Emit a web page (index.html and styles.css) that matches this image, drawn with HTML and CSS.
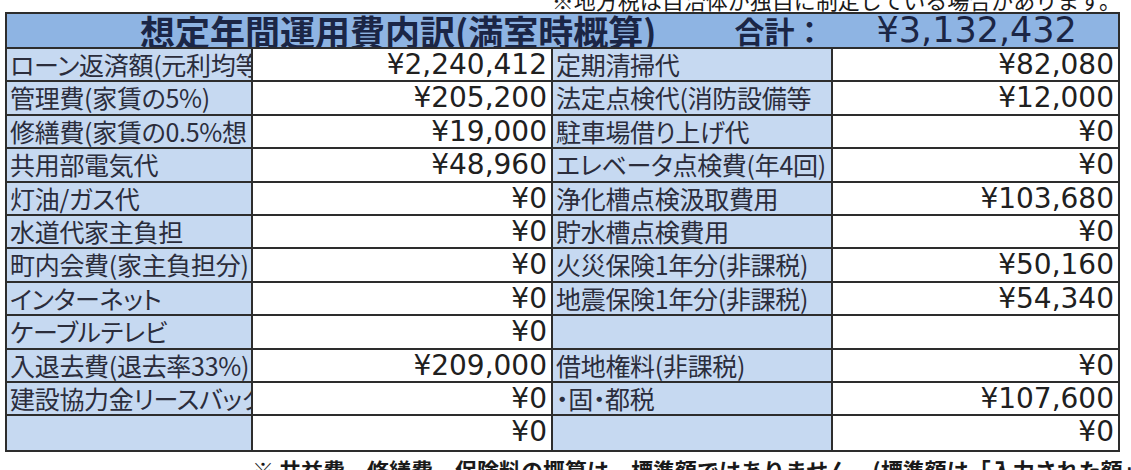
FILE: index.html
```html
<!DOCTYPE html>
<html lang="ja">
<head>
<meta charset="utf-8">
<title>想定年間運用費内訳</title>
<link rel="stylesheet" href="styles.css">
</head>
<body>
<div class="page">
  <div class="note-top">※地方税は自治体が独自に制定している場合があります。</div>
  <div class="sheet">
    <div class="head">
      <span class="head-title">想定年間運用費内訳(満室時概算)</span>
      <span class="head-sum">合計：</span>
      <span class="head-total">¥3,132,432</span>
    </div>
    <div class="grid">
      <div class="lbl">ローン返済額(元利均等</div><div class="val">¥2,240,412</div><div class="lbl">定期清掃代</div><div class="val">¥82,080</div>
      <div class="lbl">管理費(家賃の5%)</div><div class="val">¥205,200</div><div class="lbl">法定点検代(消防設備等</div><div class="val">¥12,000</div>
      <div class="lbl">修繕費(家賃の0.5%想</div><div class="val">¥19,000</div><div class="lbl">駐車場借り上げ代</div><div class="val">¥0</div>
      <div class="lbl">共用部電気代</div><div class="val">¥48,960</div><div class="lbl">エレベータ点検費(年4回)</div><div class="val">¥0</div>
      <div class="lbl">灯油/ガス代</div><div class="val">¥0</div><div class="lbl">浄化槽点検汲取費用</div><div class="val">¥103,680</div>
      <div class="lbl">水道代家主負担</div><div class="val">¥0</div><div class="lbl">貯水槽点検費用</div><div class="val">¥0</div>
      <div class="lbl">町内会費(家主負担分)</div><div class="val">¥0</div><div class="lbl">火災保険1年分(非課税)</div><div class="val">¥50,160</div>
      <div class="lbl">インターネット</div><div class="val">¥0</div><div class="lbl">地震保険1年分(非課税)</div><div class="val">¥54,340</div>
      <div class="lbl">ケーブルテレビ</div><div class="val">¥0</div><div class="lbl"></div><div class="val"></div>
      <div class="lbl">入退去費(退去率33%)</div><div class="val">¥209,000</div><div class="lbl">借地権料(非課税)</div><div class="val">¥0</div>
      <div class="lbl">建設協力金リースバック</div><div class="val">¥0</div><div class="lbl">・固・都税</div><div class="val">¥107,600</div>
      <div class="lbl"></div><div class="val">¥0</div><div class="lbl"></div><div class="val">¥0</div>
    </div>
  </div>
  <div class="note-bottom">※ 共益費、修繕費、保険料の概算は、標準額ではありません。(標準額は「入力された額」)</div>
</div>
</body>
</html>
```
FILE: styles.css
```css
html, body {
  margin: 0;
  padding: 0;
  background: #ffffff;
}
.page {
  width: 1131px;
  height: 470px;
  overflow: hidden;
  font-family: "Noto Sans CJK JP", sans-serif;
  color: #222;
}
.note-top {
  margin-top: -13px;
  height: 25px;
  line-height: 25px;
  font-size: 22px;
  text-align: right;
  padding-right: 10px;
  color: #1a1a1a;
  white-space: nowrap;
}
.sheet {
  margin-left: 5px;
  width: 1115px;
  border: 2px solid #2d2d2d;
  box-sizing: border-box;
}
.head {
  height: 33px;
  background: #8eb4e3;
  border-bottom: 2px solid #2d2d2d;
  display: flex;
  align-items: center;
  color: #1b2646;
  font-weight: bold;
  line-height: 33px;
  white-space: nowrap;
  overflow: hidden;
}
.head-title {
  font-size: 35px;
  margin-left: 133px;
  font-feature-settings: "palt";
}
.head-sum {
  font-size: 30px;
  margin-left: 78px;
}
.head-total {
  font-family: "DejaVu Sans", sans-serif;
  font-weight: normal;
  font-size: 35px;
  margin-left: 52px;
}
.grid {
  display: grid;
  grid-template-columns: 246px 300px 280px 285px;
  grid-auto-rows: 33.4px;
}
.lbl, .val {
  border-bottom: 2px solid #2d2d2d;
  border-right: 2px solid #2d2d2d;
  box-sizing: border-box;
  overflow: hidden;
  white-space: nowrap;
  line-height: 31px;
}
.grid > :nth-child(4n) {
  border-right: none;
}
.grid > :nth-last-child(-n+4) {
  border-bottom: none;
}
.lbl {
  background: #c6d9f1;
  font-size: 25px;
  letter-spacing: -0.3px;
  padding-left: 3px;
  color: #2b2d3c;
  font-feature-settings: "palt";
  text-overflow: clip;
}
.val {
  background: #ffffff;
  font-family: "DejaVu Sans", sans-serif;
  font-size: 28px;
  text-align: right;
  padding-right: 4px;
  color: #202020;
}
.note-bottom {
  margin-top: 4px;
  padding-left: 252px;
  font-size: 22px;
  line-height: 26px;
  white-space: nowrap;
  font-weight: bold;
  color: #1a1a1a;
}
```
